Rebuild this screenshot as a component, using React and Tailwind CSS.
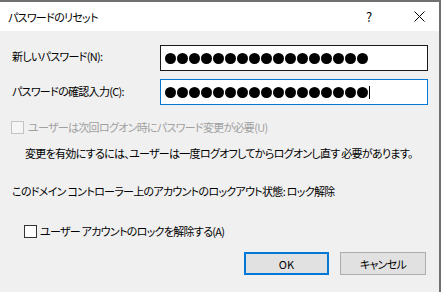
import React from "react";

const dots = Array.from({ length: 17 });

const PasswordBox = ({ focused }) => (
	<div
		className={`flex items-center w-[268px] h-[26px] bg-white pl-[4px] border ${
			focused ? "border-[#0078d7]" : "border-[#1a1a1a]"
		}`}
	>
		<div className="flex items-center gap-px">
			{dots.map((_, i) => (
				<span key={i} className="block w-[11px] h-[11px] rounded-full bg-black" />
			))}
		</div>
		{focused && <span className="block ml-px w-px h-[13px] bg-black" />}
	</div>
);

const App = () => {
	return (
		<div
			className="w-[442px] h-[292px] bg-white overflow-hidden text-[11px] leading-[16px] tracking-[-0.7px] whitespace-nowrap text-black [font-feature-settings:'palt']"
			style={{ fontFamily: '"Noto Sans CJK JP", "Noto Sans", sans-serif' }}
		>
			<div className="w-[441px] h-[292px] border-t-2 border-r-2 border-[#707070] flex flex-col">
				{/* title bar */}
				<div className="flex items-center h-[29px] bg-white shrink-0">
					<span className="pl-[8px] flex-1">パスワードのリセット</span>
					<span className="w-[12px] text-center text-[13px] tracking-normal mr-[39px]">?</span>
					<svg width="11" height="11" viewBox="0 0 11 11" className="mr-[14px]">
						<path d="M0.5 0.5 L10.5 10.5 M10.5 0.5 L0.5 10.5" stroke="#000" strokeWidth="1" />
					</svg>
				</div>

				{/* body */}
				<div className="flex-1 bg-[#f0f0f0] pl-[12px] pt-[14px]">
					<div className="flex items-center">
						<span className="w-[148px] -mt-[4px]">新しいパスワード(N):</span>
						<PasswordBox />
					</div>
					<div className="flex items-center mt-[8px]">
						<span className="w-[148px] -mt-[2px]">パスワードの確認入力(C):</span>
						<PasswordBox focused />
					</div>

					<div className="flex items-center mt-[14px] -ml-px">
						<span className="block w-[13px] h-[13px] border border-[#c4c4c4] bg-[#f5f5f5]" />
						<span className="ml-[4px] text-[#a0a0a0]">ユーザーは次回ログオン時にパスワード変更が必要(U)</span>
					</div>

					<p className="mt-[10px] ml-[13px]">
						変更を有効にするには、ユーザーは一度ログオフしてからログオンし直す 必要があります。
					</p>

					<p className="mt-[22px]">
						このドメイン コントローラー上のアカウントのロックアウト状態: ロック解除
					</p>

					<div className="flex items-center mt-[24px] ml-[12px]">
						<span className="block w-[13px] h-[13px] border border-[#333333] bg-white" />
						<span className="ml-[3px]">ユーザー アカウントのロックを解除する(A)</span>
					</div>

					<div className="flex justify-end gap-[11px] mt-[13px] pr-[13px]">
						<button className="w-[85px] h-[23px] bg-[#e1e1e1] border-2 border-[#0078d7] text-[11px] tracking-normal">
							OK
						</button>
						<button className="w-[86px] h-[23px] bg-[#e1e1e1] border border-[#adadad]">
							キャンセル
						</button>
					</div>
				</div>
			</div>
		</div>
	);
};

export default App;
